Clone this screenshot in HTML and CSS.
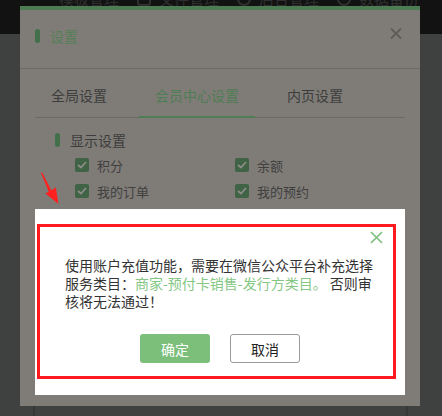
FILE: index.html
```html
<!DOCTYPE html>
<html lang="zh-CN">
<head>
    <meta charset="UTF-8">
    <title>设置 - 会员中心</title>
    <link rel="stylesheet" href="styles.css">
</head>
<body>

    <div class="topbar">
        <ul class="nav">
            <li><span class="nav-icon grid"></span>模板管理</li>
            <li><span class="nav-icon"></span>文件管理</li>
            <li><span class="nav-icon round"></span>后台管理</li>
            <li><span class="nav-icon round"></span>数据备份</li>
        </ul>
    </div>
    <div class="page-panel"></div>

    <!-- janela de configuracoes (escurecida pela mascara) -->
    <div class="settings">
        <div class="settings-head">
            <span class="mark"></span>
            <span class="settings-title">设置</span>
            <svg class="settings-close" width="12" height="11" viewBox="0 0 12 11">
                <path d="M1 0.5 L11 10.5 M11 0.5 L1 10.5" stroke="#5d5b58" stroke-width="1.8" fill="none"/>
            </svg>
        </div>
        <ul class="tabs">
            <li>全局设置</li>
            <li class="active">会员中心设置</li>
            <li>内页设置</li>
        </ul>
        <div class="section">
            <div class="section-title"><span class="mark"></span>显示设置</div>
            <div class="checks">
                <label class="check"><span class="box"><svg width="10" height="8" viewBox="0 0 10 8"><path d="M1 4 L4 6.5 L9 1" stroke="#8e8c87" stroke-width="1.8" fill="none"/></svg></span>积分</label>
                <label class="check"><span class="box"><svg width="10" height="8" viewBox="0 0 10 8"><path d="M1 4 L4 6.5 L9 1" stroke="#8e8c87" stroke-width="1.8" fill="none"/></svg></span>余额</label>
                <label class="check"><span class="box"><svg width="10" height="8" viewBox="0 0 10 8"><path d="M1 4 L4 6.5 L9 1" stroke="#8e8c87" stroke-width="1.8" fill="none"/></svg></span>我的订单</label>
                <label class="check"><span class="box"><svg width="10" height="8" viewBox="0 0 10 8"><path d="M1 4 L4 6.5 L9 1" stroke="#8e8c87" stroke-width="1.8" fill="none"/></svg></span>我的预约</label>
            </div>
        </div>
    </div>

    <!-- seta vermelha -->
    <svg class="arrow" width="22" height="34" viewBox="0 0 22 34">
        <path d="M1 1 L8.7 19.7 L5.4 21.6 L18.5 32 L15.8 15.4 L11.3 18.3 L2.2 0.6 Z" fill="#ff2020"/>
    </svg>

    <!-- aviso -->
    <div class="alert">
        <div class="alert-frame">
            <svg class="alert-close" width="13" height="13" viewBox="0 0 13 13">
                <path d="M1 1 L12 12 M12 1 L1 12" stroke="#7cbf7c" stroke-width="1.6" fill="none"/>
            </svg>
            <p class="alert-text">使用账户充值功能，需要在微信公众平台补充选择服务类目：<span class="hl">商家-预付卡销售-发行方类目。</span> 否则审核将无法通过！</p>
            <div class="alert-buttons">
                <button class="btn btn-ok">确定</button>
                <button class="btn btn-cancel">取消</button>
            </div>
        </div>
    </div>

</body>
</html>
```

FILE: styles.css
```css
body {
    margin: 0;
    padding: 0;
    background-color: #3f4140;
    font-family: "Noto Sans CJK SC", "Noto Sans", sans-serif;
    height: 416px;
    overflow: hidden;
    position: relative;
}

/* barra superior */
.topbar {
    height: 34px;
    background-color: #121212;
    overflow: hidden;
}

.nav {
    list-style: none;
    margin: 0;
    padding: 0 0 0 37px;
    display: flex;
    margin-top: -12px;
}

.nav li {
    display: flex;
    align-items: center;
    color: #2f2f2f;
    font-size: 15px;
    width: 100px;
}

.nav-icon {
    display: inline-block;
    width: 14px;
    height: 14px;
    border: 2px solid #2f2f2f;
    border-radius: 3px;
    box-sizing: border-box;
    margin-right: 8px;
}

.nav-icon.grid {
    border: none;
    border-top: 5px dotted #2f2f2f;
    border-radius: 0;
}

.nav-icon.round {
    border-radius: 50%;
}

.page-panel {
    margin: 0 34px 0 33px;
    height: 382px;
    border-left: 2px solid #363837;
    border-right: 2px solid #363837;
}

/* janela de configuracoes */
.settings {
    position: absolute;
    left: 20px;
    top: 6px;
    width: 400px;
    height: 400px;
    background-color: #7f7c77;
    border-top: 4px solid #4d7b52;
    box-sizing: border-box;
}

.settings-head {
    height: 59px;
    border-bottom: 1px solid #6c6a66;
    display: flex;
    align-items: center;
    padding: 0 18px 6px 15px;
    box-sizing: border-box;
}

.mark {
    display: inline-block;
    width: 5px;
    height: 14px;
    border-radius: 3px;
    background-color: #41704a;
    margin-right: 10px;
}

.settings-title {
    color: #557f58;
    font-size: 14px;
    flex: 1;
}

.settings-close {
    margin-top: -6px;
}

.tabs {
    list-style: none;
    margin: 0 15px;
    padding: 0;
    display: flex;
    height: 48px;
    border-bottom: 1px solid #6b6966;
}

.tabs li {
    padding: 0 16px;
    margin-right: 16px;
    font-size: 14px;
    color: #3c3c3c;
    display: flex;
    align-items: center;
    padding-top: 4px;
}

.tabs li.active {
    color: #4f7d54;
    border-bottom: 2px solid #4f7d54;
    margin-bottom: -1px;
}

.section {
    padding: 14px 0 0 35px;
}

.section-title {
    display: flex;
    align-items: center;
    font-size: 14px;
    color: #3c3c3c;
    height: 16px;
}

.checks {
    display: grid;
    grid-template-columns: 160px 160px;
    row-gap: 12px;
    padding: 10px 0 0 20px;
}

.check {
    display: flex;
    align-items: center;
    font-size: 13px;
    color: #3f3f3f;
    height: 14px;
}

.box {
    width: 14px;
    height: 14px;
    background-color: #3f6344;
    border-radius: 2px;
    display: flex;
    align-items: center;
    justify-content: center;
    margin-right: 8px;
}

.arrow {
    position: absolute;
    left: 40px;
    top: 172px;
}

/* aviso */
.alert {
    position: absolute;
    left: 35px;
    top: 209px;
    width: 370px;
    height: 186px;
    background-color: white;
    padding: 15px 9px 16px 2px;
    box-sizing: border-box;
}

.alert-frame {
    position: relative;
    height: 155px;
    border: 3px solid #ff1a1f;
    box-sizing: border-box;
    padding: 29px 0 0 25px;
}

.alert-close {
    position: absolute;
    right: 10px;
    top: 4px;
}

.alert-text {
    margin: 0;
    width: 312px;
    font-size: 14px;
    line-height: 18px;
    color: #333;
}

.hl {
    color: #85c785;
}

.alert-buttons {
    display: flex;
    gap: 20px;
    margin: 24px 0 0 75px;
}

.btn {
    width: 70px;
    height: 29px;
    font-family: inherit;
    font-size: 14px;
    border-radius: 3px;
    cursor: pointer;
}

.btn-ok {
    background-color: #7bbf7b;
    color: white;
    border: none;
}

.btn-cancel {
    background-color: white;
    color: #222;
    border: 1px solid #999;
}
```
